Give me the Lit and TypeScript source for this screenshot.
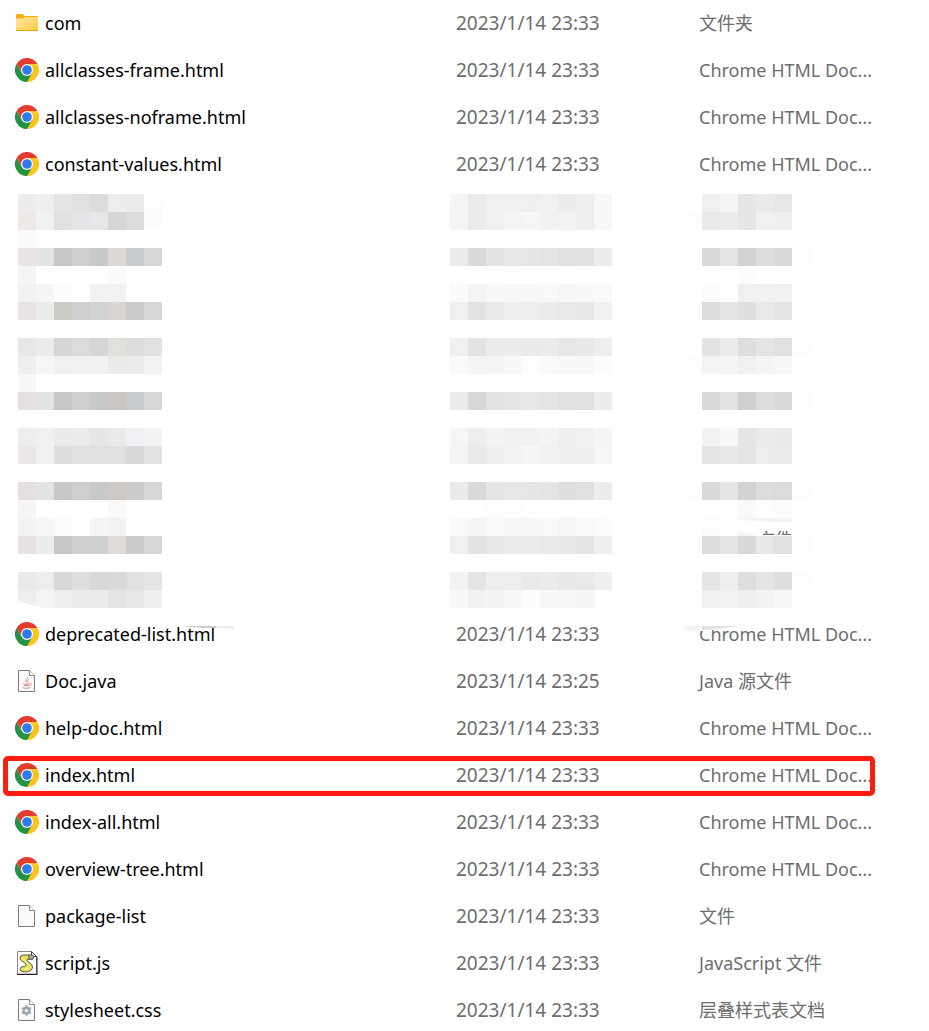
import { LitElement, html, css, svg } from "lit";
import { customElement, property } from "lit/decorators.js";

type Kind = "folder" | "chrome" | "java" | "blank" | "script" | "css";

interface Entry {
  name: string;
  date: string;
  type: string;
  kind: Kind;
  marked?: boolean;
  smudged?: boolean;
}

const CHROME_TYPE = "Chrome HTML Doc...";
const DATE = "2023/1/14 23:33";

const page = (name: string): Entry => ({ name, date: DATE, type: CHROME_TYPE, kind: "chrome" });

const BEFORE: Entry[] = [
  { name: "com", date: DATE, type: "文件夹", kind: "folder" },
  page("allclasses-frame.html"),
  page("allclasses-noframe.html"),
  page("constant-values.html"),
];

const AFTER: Entry[] = [
  { ...page("deprecated-list.html"), smudged: true },
  { name: "Doc.java", date: "2023/1/14 23:25", type: "Java 源文件", kind: "java" },
  page("help-doc.html"),
  { ...page("index.html"), marked: true },
  page("index-all.html"),
  page("overview-tree.html"),
  { name: "package-list", date: DATE, type: "文件", kind: "blank" },
  { name: "script.js", date: DATE, type: "JavaScript 文件", kind: "script" },
  { name: "stylesheet.css", date: DATE, type: "层叠样式表文档", kind: "css" },
];

/* One string per band of tiles, one colour per tile; "-" leaves a tile white. */
const NAME_TILES = [
  "eeebec efefef e4e4e2 e1e1e1 dadddb ededed ebebe9 fdfdfd",
  "eee8e7 f1f1f1 e1e0de e3e5e8 e7e7e7 d6d6d6 dddcda fbfcfe",
  "fafafa - - - - - - -",
  "e9e3e3 e3e3e1 c8c7c5 cdced0 c7c9c8 dcd8d5 c7cbce d6d7d9",
  "f5f5f5 - - - - fafafa - -",
  "f1f1f1 f5f5f5 fafdfc - f2f2f2 f2f2f2 fdfefe -",
  "e9e3e3 ebebeb cccbc6 cdced0 d2d4d3 d9d5d2 cacbcd d6d7d9",
  "- - - - - - - -",
  "e8e7e5 ebebeb d6d5d3 dadbdd d5d5d5 e1e0dc dcdddf e0e1e3",
  "f0eef0 f6f6f6 f0f0f0 f1f1f1 eff2f1 ebeae8 eaebed f2f4f3",
  "f7f7f7 - - - - - - -",
  "e5dfdf e3e3e1 c8c7c5 cdced0 c7c9c8 cbc6c3 c7cbce d6d7d9",
  "- - - - - - - -",
  "ededed f0f0f0 eaeae8 ebebeb e4e7e6 eae9e7 eff1f4 f3f3f3",
  "ebe7e9 f0f0f0 dddcda dfe0e2 e0e0e0 e1e0de d7d8da e1e2e4",
  "- - - - - - - -",
  "e5dfdf e3e3e1 c8c7c5 cdced0 c7c9c8 cec9c6 cacbcd d6d7d9",
  "f5f5f5 - - - - f9f9f7 - -",
  "f2f2f2 f6f6f6 fcfcfc - f5f5f5 f2f2f0 fdfffe -",
  "e7e1e1 ebebeb c9c8c6 cdced0 cdced0 dfdbd8 cacbcd d6d7d9",
  "- - - - - - - -",
  "eae9e7 ededeb d9d8d6 dddee0 d8d8d8 dad9d7 dfe0e2 e3e4e6",
  "efedee f4f4f4 ededeb ececec eaecec e5e4e2 e6e7e9 efefef",
];

const DATE_TILES = [
  "f5f5f3 edebe9 f0f0f0 f0f0f0 efefef f1f1f1 ececec eeeeec f5f8f7",
  "f4f4f4 ececec f0f0f0 f4f4f2 f6f6f6 f1f1f1 f2f2f2 efefef f8f8f8",
  "- - - - - - - - -",
  "ebebe9 d9d9d9 e1e4e3 e7e7e7 e6e6e6 e4e4e4 dfe1e1 e1e1df ececec",
  "- - fefefe fefefe - - - - -",
  "fafafa f4f4f4 f8f8f8 f7f7f7 f7f7f7 f9f9f9 f5f7f6 f8f8f8 f9f9f9",
  "f0f0ee e2e2e2 e7eae9 ededed eeeeee ebebeb e8eaea e7e7e7 f1f1f1",
  "- - - - - - - - -",
  "f0f0ee e3e3e3 ececec ececec eaeaea ebebeb e5e8e7 e8e8e6 eeeeee",
  "f9f9f9 f5f5f5 f4f4f4 f8f8f8 fdfdfd f9f9f9 f5f8f7 f7f7f7 fcfcfc",
  "- - - - - - - - -",
  "ebebe9 d8d8d8 e2e2e2 e6e6e6 e7e7e7 e4e4e4 dee1e0 e0e0de ececec",
  "- - - - - - - - -",
  "f6f6f6 eeedeb f1f4f3 f1f1f1 f1f1f1 f3f3f3 eeeeee f0f0f0 f5f5f5",
  "f4f4f2 e9e9e9 efefed f2f2f2 f3f6f5 f0f0f0 eef0ef eeeeee f4f7f6",
  "- - - - - - - - -",
  "ebeae8 d9d9d9 e2e5e4 e7e7e7 e6e6e6 e4e4e4 dee0e0 e1e0de ececec",
  "- - fdfdfd fdfdfd - - - - -",
  "fafafa f6f5f3 f9f9f9 f7f7f7 f7f7f7 f9f9f9 f6f6f6 f9f9f9 fbfbfb",
  "f0f0f0 e2e2e2 e7e7e7 ebebeb ececec e9e9e9 e8e8e8 e5e5e5 edf0ef",
  "- - - - - - - - -",
  "f2f2f2 e4e4e4 eceeed eceeed e9e9e9 ebebeb e6e9e8 e8e9e9 efefef",
  "f8f8f8 f1f1f1 f3f3f3 f6f6f6 fafdfc f7f7f5 f5f7f6 f5f5f5 fdfdfd",
];

const TYPE_TILES = [
  "- eef1f0 f5f5f5 e7e6e4 e8ebea e7e7e7 fefefe",
  "fdfdfd e9e9e9 ebebeb e6e6e6 f0f0f0 efefef fefefe",
  "- - - - - - -",
  "fdfdfd dadada e2e4e6 d3d2d0 dcdddf dadada fdfdfd",
  "- - - fcfcfc - fefefe -",
  "- fbfbfb - f0f0ee f1f1f1 f1f1f1 fefefe",
  "fdfdfd dcdcdc e2e4e6 dfdedc e8e9eb e5e5e5 fefefe",
  "- - - - - - -",
  "- e3e3e3 ebebeb dededc e4e5e7 e0e0e0 fdfdfd",
  "fdfdfd f4f4f4 f5f5f5 f0f0f0 f5f5f5 f7f7f7 -",
  "- - - fefefe fdfdfd fdfdfd -",
  "fdfdfd dadada e1e3e5 d0cfcd dcdddf d9d9d9 fdfdfd",
  "- - - - - - -",
  "- f2f2f2 f8f8f8 e7e6e4 ebebeb eaeaea fefefe",
  "fdfdfd e5e5e5 e8e8e8 e6e5e3 ededed ebebeb fefefe",
  "- - - - - - -",
  "fdfdfd dadada e2e4e6 d4d3d1 dcdddf dbdbdb fdfdfd",
  "- - - f9f9f9 fdfdfd fbfbfb -",
  "- fcfcfc - f4f4f4 f4f4f4 f5f5f5 -",
  "fdfdfd dcdcdc e2e4e6 d9d8d6 e7e8ea e0e0e0 fdfdfd",
  "- - - - - - -",
  "- e5e5e5 eeeeee dfdedc e4e5e7 dfdfdf fdfdfd",
  "fdfdfd f1f1f1 f1f4f3 eeeeee f3f3f3 f5f8f7 -",
];

const TILE = 18;

const tiles = (rows: string[]) =>
  rows.flatMap((row, y) =>
    row.split(" ").map((c, x) =>
      c === "-" ? null : svg`<rect x=${x * TILE} y=${y * TILE} width=${TILE} height=${TILE} fill=${"#" + c}></rect>`
    )
  );

const sheet = svg`
  <path d="M3.500 1.500h11l5 5v16h-16z" fill="#fafafa" stroke="#7d7d7d"></path>
  <path d="M14.500 1.500v5h5" fill="#fff" stroke="#8a8a8a"></path>`;

const glyphs: Record<Kind, unknown> = {
  folder: svg`
    <path d="M1 4.500q0-1.500 1.500-1.500h5l2 2h13.500v3h-22z" fill="#f4ae13"></path>
    <path d="M1 7.500h7l2-1.500h13v13.500h-22z" fill="url(#folder)"></path>
    <path d="M1 19.500h22" stroke="#e2a01f"></path>`,
  chrome: svg`
    <path d="M12 12L22.400 6A12 12 0 0 1 12 24z" fill="#fcc31e"></path>
    <path d="M12 6H22.400L12 12z" fill="#fcc31e"></path>
    <path d="M17.200 15L12 24L12 12z" fill="#fcc31e"></path>
    <path d="M6.800 15L1.600 6A12 12 0 0 0 12 24L17.200 15L12 12z" fill="#229342"></path>
    <path d="M1.600 6A12 12 0 0 1 22.400 6H12L6.800 15z" fill="#e33b2e"></path>
    <circle cx="12" cy="12" r="6" fill="#fff"></circle>
    <circle cx="12" cy="12" r="4.800" fill="#2d7bea"></circle>`,
  java: svg`${sheet}
    <path d="M12.500 8c1 2-3 3-1 5.500M14 10.500c-2 1-1 1.500-1.200 3M8 14.500c1 1 5 1 6.500 0M9 16.500h5M7.500 18.500c2 1.200 6.500 1 8-.2M15 14.500c2 0 1 1.800-.5 2" fill="none" stroke="#d77b7b" stroke-width=".9"></path>`,
  blank: sheet,
  script: svg`
    <path d="M2.500.500h14l5 5v17.500h-19z" fill="#fff" stroke="#8a8a8a"></path>
    <path d="M16.500.500v5h5z" fill="#fff" stroke="#444"></path>
    <path d="M2 23.500h20.500M22 6v17" stroke="#222" fill="none"></path>
    <path d="M8.500 4q-3 0-3.500 3c0 3.500 5.500 4 6 7c0 1.500-1 1.500-2 1.500q-4 0-4 2.500q0 2.800 4 2.800c5 .4 8.500-1.500 8.500-5c0-3.800-5.500-4.300-5.800-6.800q0-1 2-.8l3.300.3q2-1 1.500-3q-1-2-4-1.500z" fill="#e9e35c" stroke="#49472e" stroke-width=".9"></path>
    <path d="M13 4.500c3-1.500 6-.5 5.500 1.500q0 2.500-2 2.500l-3-.3q1-2-.5-3.700z" fill="#a0a0a0" stroke="#444" stroke-width=".6"></path>
    <path d="M8 7l6 7.500M9 18.500l5-1.500" stroke="#fbf9c8" fill="none"></path>`,
  css: svg`${sheet}
    <g stroke="#98a5b1" fill="none">
      <path d="M11.500 7.500v10M7.200 10l8.600 5M15.800 10l-8.600 5" stroke-width="2.400"></path>
      <circle cx="11.500" cy="12.500" r="2.800" stroke-width="2.200"></circle>
    </g>
    <circle cx="11.500" cy="12.500" r="1.600" fill="#fafafa"></circle>`,
};

@customElement("file-icon")
export class FileIcon extends LitElement {
  @property() kind: Kind = "blank";

  static styles = css`
    :host {
      display: block;
      flex: none;
      width: 24px;
      height: 24px;
    }
    .glyph {
      display: block;
    }
  `;

  render() {
    return html`<svg class="glyph" width="24" height="24" viewBox="0 0 24 24" aria-hidden="true">
      <defs>
        <linearGradient id="folder" x1="0" y1="0" x2="1" y2="1">
          <stop offset="0" stop-color="#ffe9a6"></stop>
          <stop offset="1" stop-color="#fdca43"></stop>
        </linearGradient>
      </defs>
      ${glyphs[this.kind]}
    </svg>`;
  }
}

@customElement("app-root")
export class AppRoot extends LitElement {
  static styles = css`
    :host {
      display: block;
      height: 100vh;
      overflow: hidden;
      background: #fff;
      color: #000;
      font: 18px/24px "Noto Sans", "Noto Sans CJK SC", sans-serif;
    }
    .files {
      width: 100%;
      table-layout: fixed;
      border-collapse: collapse;
    }
    .name-col {
      width: 450px;
    }
    .date-col {
      width: 234px;
    }
    .row {
      position: relative;
      height: 47px;
    }
    .cell {
      padding: 0 0 1px;
      text-align: left;
      font-weight: normal;
      white-space: nowrap;
      color: #6d6d6d;
    }
    .name {
      padding-left: 15px;
      color: #000;
    }
    .label {
      display: flex;
      align-items: center;
      gap: 6px;
    }
    .date {
      padding-left: 6px;
      font-size: 19px;
    }
    .type {
      padding-left: 15px;
    }
    .hidden-cell {
      padding: 6px 0 3px;
      vertical-align: top;
    }
    .hidden-name {
      padding-left: 18px;
    }
    .tiles {
      display: block;
    }
    .leftover {
      font-size: 18px;
      fill: #6d6d6d;
    }
    .mark {
      position: absolute;
      inset: 4px 54px 3px 3px;
      border: 5px solid #ff1d10;
      border-radius: 5px;
    }
    .smudge {
      position: absolute;
      top: 14px;
    }
    .smudge-name {
      left: 180px;
    }
    .smudge-type {
      left: 684px;
    }
  `;

  private row(e: Entry) {
    return html`<tr class="row">
      <th class="cell name" scope="row">
        <span class="label"><file-icon .kind=${e.kind}></file-icon>${e.name}</span>
        ${e.smudged
          ? html`<svg class="smudge smudge-name" width="56" height="8" aria-hidden="true">
                <path d="M0 0h56v3h-22q-18 0-34-2z" fill="#fff"></path>
                <path d="M3 1h33v2q-18 0-33-2z" fill="#c9c9c9"></path>
                <path d="M36 1h18v3q-9-1-18-1z" fill="#ececec"></path>
              </svg>
              <svg class="smudge smudge-type" width="60" height="8" aria-hidden="true">
                <path d="M0 0h60v1q-18 3-42 5h-18z" fill="#fff"></path>
                <path d="M0 1h18v4q-9 1-18 0z" fill="#f3f3f3"></path>
                <path d="M18 1h38q-18 3-38 4z" fill="#e2e2e2"></path>
              </svg>`
          : null}
        ${e.marked ? html`<span class="mark"></span>` : null}
      </th>
      <td class="cell date">${e.date}</td>
      <td class="cell type">${e.type}</td>
    </tr>`;
  }

  private hiddenRows() {
    const height = NAME_TILES.length * TILE;
    return html`<tr>
      <td class="hidden-cell hidden-name">
        <svg class="tiles" width="144" height=${height} aria-hidden="true">
          ${tiles(NAME_TILES)}
          <path d="M0 407q14 5 27 7h-27z" fill="#fff"></path>
        </svg>
      </td>
      <td class="hidden-cell">
        <svg class="tiles" width="162" height=${height} aria-hidden="true">${tiles(DATE_TILES)}</svg>
      </td>
      <td class="hidden-cell">
        <svg class="tiles" width="126" height=${height} aria-hidden="true">
          ${tiles(TYPE_TILES)}
          <path d="M18 326h36q26 2 54 2v14h-34l-20-5-36-3z" fill="#fff"></path>
          <svg x="79" y="337" width="28" height="4">
            <text class="leftover" x="-6" y="15">文件</text>
          </svg>
        </svg>
      </td>
    </tr>`;
  }

  render() {
    return html`<table class="files">
      <colgroup>
        <col class="name-col" />
        <col class="date-col" />
        <col />
      </colgroup>
      <tbody>
        ${BEFORE.map((e) => this.row(e))} ${this.hiddenRows()} ${AFTER.map((e) => this.row(e))}
      </tbody>
    </table>`;
  }
}
